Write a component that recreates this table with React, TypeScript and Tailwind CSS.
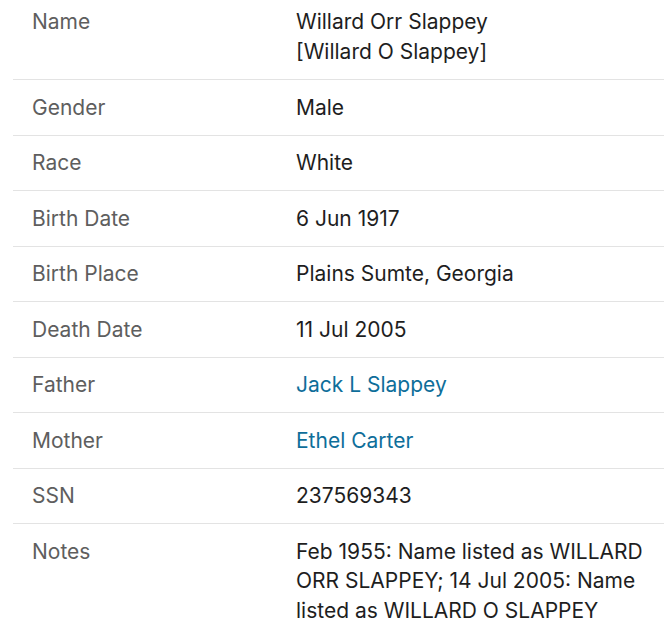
const ROWS: { label: string; value: string[]; link?: boolean }[] = [
  { label: "Name", value: ["Willard Orr Slappey", "[Willard O Slappey]"] },
  { label: "Gender", value: ["Male"] },
  { label: "Race", value: ["White"] },
  { label: "Birth Date", value: ["6 Jun 1917"] },
  { label: "Birth Place", value: ["Plains Sumte, Georgia"] },
  { label: "Death Date", value: ["11 Jul 2005"] },
  { label: "Father", value: ["Jack L Slappey"], link: true },
  { label: "Mother", value: ["Ethel Carter"], link: true },
  { label: "SSN", value: ["237569343"] },
  {
    label: "Notes",
    value: [
      "Feb 1955: Name listed as WILLARD ORR SLAPPEY; 14 Jul 2005: Name listed as WILLARD O SLAPPEY",
    ],
  },
];

export default function App() {
  return (
    <div
      className="min-h-screen bg-white pl-[13px] text-[21px] leading-[29.5px]"
      style={{ fontFamily: "Inter, 'Liberation Sans', sans-serif" }}
    >
      {ROWS.map((row, i) => (
        <div
          key={row.label}
          className={`flex ${i === 0 ? "pt-[7px] pb-[13px]" : "py-[12.5px]"} ${
            i < ROWS.length - 1 ? "border-b border-[#e3e3e3]" : ""
          }`}
        >
          <div className="w-[283px] shrink-0 pl-[19px] text-[#5e5e5e]">
            {row.label}
          </div>
          <div className="flex-1 pr-[8px]">
            {row.value.map((v) =>
              row.link ? (
                <a key={v} href="#" className="block text-[#0e6e9a]">
                  {v}
                </a>
              ) : (
                <div key={v} className="text-[#1e1e1e]">
                  {v}
                </div>
              ),
            )}
          </div>
        </div>
      ))}
    </div>
  );
}
